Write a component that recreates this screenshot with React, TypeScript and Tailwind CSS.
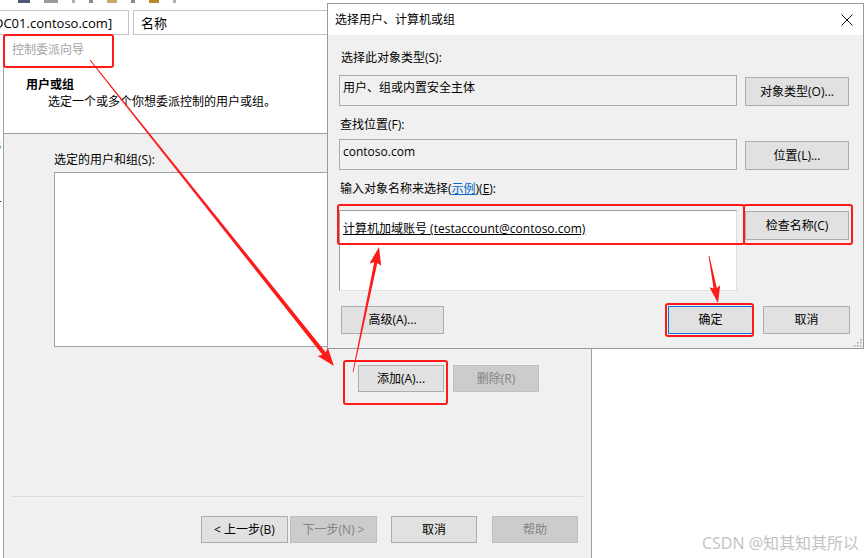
import type { ReactNode } from "react";

type Pt = [number, number];

// tapered annotation arrow, thin at the tail and wide at the head
function arrowPoints(from: Pt, tip: Pt, w0: number, w1: number, hl: number, hw: number) {
  const dx = tip[0] - from[0];
  const dy = tip[1] - from[1];
  const len = Math.hypot(dx, dy);
  const ux = dx / len;
  const uy = dy / len;
  const nx = -uy;
  const ny = ux;
  const bx = tip[0] - ux * hl;
  const by = tip[1] - uy * hl;
  const p = (x: number, y: number) => `${x.toFixed(1)},${y.toFixed(1)}`;
  return [
    p(from[0] + (nx * w0) / 2, from[1] + (ny * w0) / 2),
    p(bx + (nx * w1) / 2, by + (ny * w1) / 2),
    p(bx - ux * 2 + (nx * hw) / 2, by - uy * 2 + (ny * hw) / 2),
    p(tip[0], tip[1]),
    p(bx - ux * 2 - (nx * hw) / 2, by - uy * 2 - (ny * hw) / 2),
    p(bx - (nx * w1) / 2, by - (ny * w1) / 2),
    p(from[0] - (nx * w0) / 2, from[1] - (ny * w0) / 2),
  ].join(" ");
}

function Btn({
  children,
  className = "",
  disabled,
  primary,
}: {
  children: ReactNode;
  className?: string;
  disabled?: boolean;
  primary?: boolean;
}) {
  return (
    <div
      className={`flex items-center justify-center border text-[12px] leading-4 ${
        disabled
          ? "bg-[#cccccc] border-[#bfbfbf] text-[#838383]"
          : primary
          ? "bg-[#e1e1e1] border-[#0078d7] text-black"
          : "bg-[#e1e1e1] border-[#adadad] text-black"
      } ${className}`}
    >
      {children}
    </div>
  );
}

function Mmc() {
  return (
    <>
      {/* toolbar remnants */}
      <div className="absolute left-0 top-0 flex h-[3px] items-start gap-[14px] pl-[18px]">
        <div className="h-[3px] w-[12px] bg-[#4a5a78]" />
        <div className="h-[3px] w-[14px] bg-[#9a9a9a]" />
        <div className="h-[3px] w-[3px] bg-[#b0b0b0]" />
        <div className="h-[3px] w-[4px] bg-[#8a8a8a]" />
        <div className="h-[3px] w-[10px] bg-[#c9a86a]" />
        <div className="h-[3px] w-[4px] bg-[#8a8a8a]" />
        <div className="h-[3px] w-[10px] bg-[#b8872e]" />
        <div className="h-[3px] w-[3px] bg-[#b0b0b0]" />
      </div>
      {/* list header */}
      <div className="absolute left-0 top-[10px] flex text-[13px] leading-4">
        <div className="flex h-[25px] w-[129px] items-center overflow-hidden border border-l-0 border-[#c4c4c4]">
          <span className="ml-[-6px] whitespace-nowrap">DC01.contoso.com]</span>
        </div>
        <div className="ml-[4px] flex h-[25px] w-[300px] items-center border border-r-0 border-[#c4c4c4] pl-[7px]">
          名称
        </div>
      </div>
      {/* tree text cut at the left edge */}
      <span className="absolute left-[-5px] top-[135px] text-[13px] text-[#333]">s</span>
      <span className="absolute left-[-4px] top-[194px] text-[13px] text-[#5a1030]">r</span>
    </>
  );
}

function Wizard() {
  return (
    <div className="absolute left-[3px] top-[35px] flex h-[523px] w-[589px] flex-col border-x border-[#a0a0a0] bg-[#f0f0f0]">
      <div className="h-[99px] shrink-0 border-b border-[#a0a0a0] bg-white">
        <div className="pl-[8px] pt-[7px] text-[12px] leading-4 text-[#a3a3a3]">控制委派向导</div>
        <div className="pl-[22px] pt-[19px] text-[12px] font-bold leading-4">用户或组</div>
        <div className="pl-[44px] pt-[1px] text-[12px] leading-4">选定一个或多个你想委派控制的用户或组。</div>
      </div>
      <div className="flex flex-1 flex-col pl-[50px] pr-[52px]">
        <div className="pt-[18px] text-[12px] leading-4">选定的用户和组(S):</div>
        <div className="mt-[4px] h-[175px] border border-[#a0a0a0] bg-white" />
        <div className="mt-[18px] flex justify-end gap-[9px]">
          <Btn className="h-[27px] w-[86px]">添加(A)...</Btn>
          <Btn className="h-[27px] w-[86px]" disabled>
            删除(R)
          </Btn>
        </div>
      </div>
      <div className="mx-[8px] border-t border-[#dcdcdc]" />
      <div className="flex h-[61px] items-start justify-end pr-[13px] pt-[19px]">
        <Btn className="h-[27px] w-[87px]">&lt; 上一步(B)</Btn>
        <Btn className="ml-[2px] h-[27px] w-[87px]" disabled>
          下一步(N) &gt;
        </Btn>
        <Btn className="ml-[14px] h-[27px] w-[86px]">取消</Btn>
        <Btn className="ml-[15px] h-[27px] w-[86px]" disabled>
          帮助
        </Btn>
      </div>
    </div>
  );
}

function PickerDialog() {
  return (
    <div className="absolute left-[327px] top-[3px] flex h-[346px] w-[537px] flex-col border border-[#9a9a9a] bg-[#f0f0f0]">
      <div className="flex h-[31px] shrink-0 items-center justify-between bg-white pl-[7px] pr-[10px]">
        <span className="text-[12px] leading-4">选择用户、计算机或组</span>
        <svg width="12" height="12" viewBox="0 0 12 12">
          <path d="M0.5 0.5 L11.5 11.5 M11.5 0.5 L0.5 11.5" stroke="#111" strokeWidth="1" />
        </svg>
      </div>
      <div className="relative flex flex-1 flex-col pl-[11px] pr-[13px]">
        <div className="ml-[2px] pt-[15px] text-[12px] leading-4">选择此对象类型(S):</div>
        <div className="mt-[9px] flex items-start gap-[8px]">
          <div className="h-[31px] w-[398px] border border-[#ababab] px-[3px] pt-[4px] text-[12px] leading-4">
            用户、组或内置安全主体
          </div>
          <Btn className="mt-[2px] h-[29px] w-[104px]">对象类型(O)...</Btn>
        </div>
        <div className="ml-[1px] mt-[11px] text-[12px] leading-4">查找位置(F):</div>
        <div className="mt-[6px] flex items-start gap-[8px]">
          <div className="h-[31px] w-[398px] border border-[#ababab] px-[3px] pt-[4px] text-[12px] leading-4">
            contoso.com
          </div>
          <Btn className="mt-[2px] h-[29px] w-[104px]">位置(L)...</Btn>
        </div>
        <div className="ml-[1px] mt-[11px] text-[12px] leading-4">
          输入对象名称来选择(<span className="text-[#0066cc] underline">示例</span>)(<span className="underline">E</span>):
        </div>
        <div className="mt-[13px] flex items-start gap-[8px]">
          <div className="h-[81px] w-[398px] border border-[#a0a0a0] border-b-[#e3e3e3] border-r-[#dcdcdc] bg-white px-[3px] pt-[10px] text-[12px] leading-4">
            <span className="underline">计算机加域账号 (testaccount@contoso.com)</span>
          </div>
          <Btn className="mt-[1px] h-[29px] w-[104px]">检查名称(C)</Btn>
        </div>
        <div className="mt-[15px] flex items-start">
          <Btn className="ml-[2px] h-[28px] w-[103px]">高级(A)...</Btn>
          <div className="flex-1" />
          <Btn className="h-[28px] w-[85px]" primary>
            确定
          </Btn>
          <Btn className="ml-[10px] h-[28px] w-[87px]">取消</Btn>
        </div>
        {/* size grip */}
        <svg className="absolute bottom-[1px] right-[1px]" width="9" height="9" viewBox="0 0 9 9">
          {[
            [7, 1],
            [4, 4],
            [7, 4],
            [1, 7],
            [4, 7],
            [7, 7],
          ].map(([x, y]) => (
            <rect key={`${x}-${y}`} x={x} y={y} width="1.5" height="1.5" fill="#a8a8a8" />
          ))}
        </svg>
      </div>
    </div>
  );
}

function Marks() {
  const red = "#ff1a1a";
  return (
    <>
      <div className="absolute left-[3px] top-[34px] h-[34px] w-[111px] rounded-[3px] border-2 border-[#ff1a1a]" />
      <div className="absolute left-[343px] top-[360px] h-[45px] w-[105px] rounded-[3px] border-2 border-[#ff1a1a]" />
      <div className="absolute left-[337px] top-[204px] h-[41px] w-[408px] rounded-[3px] border-2 border-[#ff1a1a]" />
      <div className="absolute left-[743px] top-[204px] h-[41px] w-[110px] rounded-[3px] border-2 border-[#ff1a1a]" />
      <div className="absolute left-[665px] top-[303px] h-[34px] w-[89px] rounded-[3px] border-2 border-[#ff1a1a]" />
      <svg className="absolute left-0 top-0" width="865" height="558" viewBox="0 0 865 558">
        <polygon points={arrowPoints([90, 60], [334, 366], 1, 4.2, 16, 13)} fill={red} />
        <polygon points={arrowPoints([353, 372], [379, 247], 0.8, 3.2, 16, 12)} fill={red} />
        <polygon points={arrowPoints([709, 256], [718, 303], 0.8, 3.2, 15, 11)} fill={red} />
      </svg>
    </>
  );
}

export default function App() {
  return (
    <div className="relative h-[558px] w-[865px] overflow-hidden bg-white font-['Open_Sans','Noto_Sans_CJK_SC',sans-serif] text-black">
      <Mmc />
      <Wizard />
      <PickerDialog />
      <Marks />
      <div className="absolute bottom-[5px] right-[6px] text-[16px] leading-5 text-[#c2c2c2]">CSDN @知其知其所以</div>
    </div>
  );
}
